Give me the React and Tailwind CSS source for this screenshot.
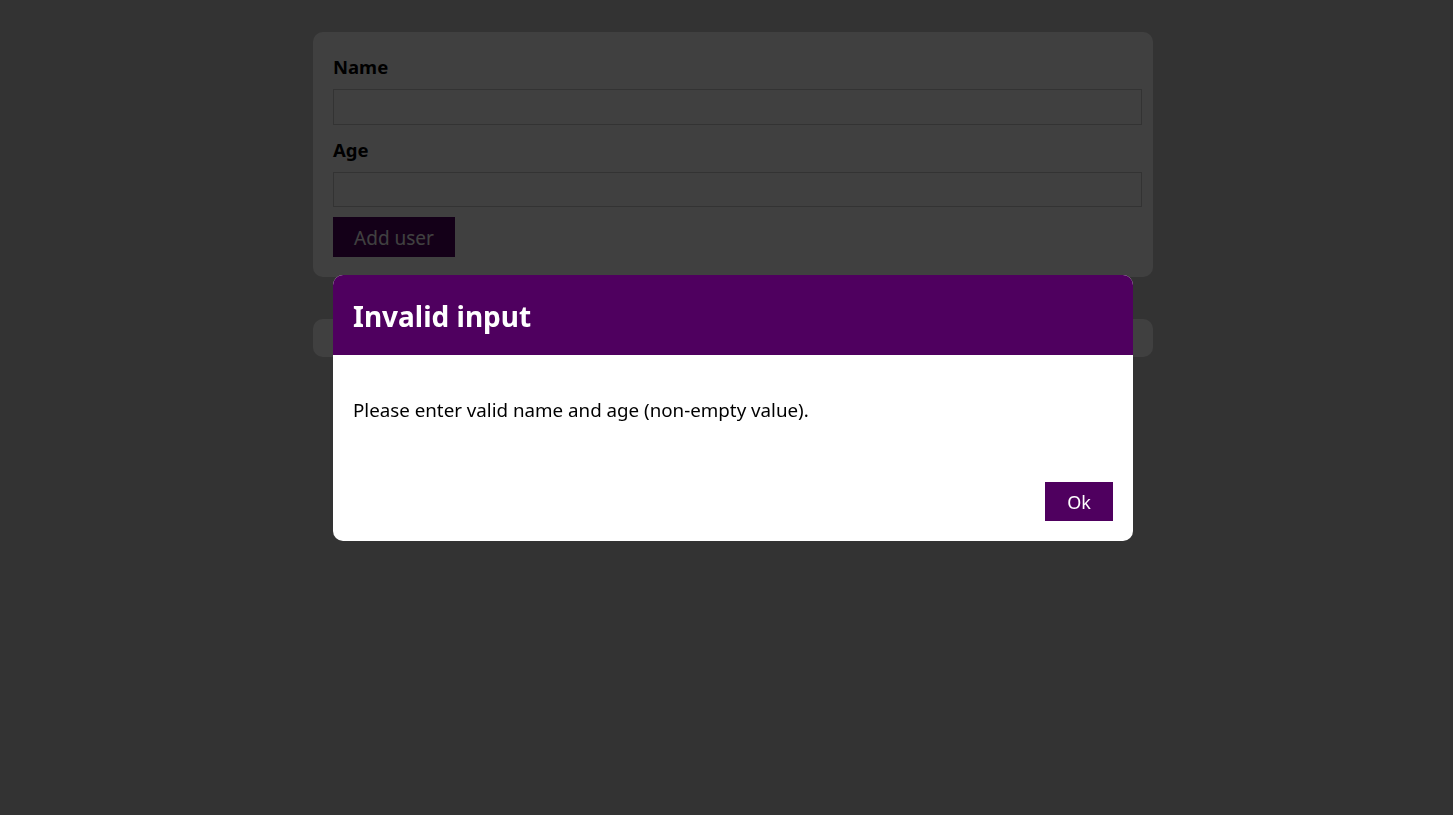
export default function App() {
  return (
    <div className="min-h-screen bg-[#cccccc] pt-8" style={{ fontFamily: '"Noto Sans", sans-serif' }}>
      {/* Add user form */}
      <section className="ml-[313px] w-[840px] rounded-[10px] bg-white px-5 pt-5 pb-5">
        <label className="block text-[18.5px] font-bold leading-[30px] text-black">Name</label>
        <input className="mt-[7px] block h-9 w-[809px] border border-[#cccccc] bg-white" />
        <label className="mt-[10px] block text-[18.5px] font-bold leading-[30px] text-black">Age</label>
        <input className="mt-[7px] block h-[35px] w-[809px] border border-[#cccccc] bg-white" />
        <button className="mt-[10px] h-10 w-[122px] bg-[#4f005f] pt-[2px] text-[19px] text-white">Add user</button>
      </section>

      {/* Users list (empty) */}
      <section className="ml-[313px] mt-[42px] h-[38px] w-[840px] rounded-[10px] bg-white" />

      {/* Backdrop */}
      <div className="fixed inset-0 bg-black/75" />

      {/* Error modal */}
      <div className="fixed top-[275px] left-[333px] w-[800px] overflow-hidden rounded-[10px] bg-white">
        <header className="flex h-[80px] items-center bg-[#4f005f] px-5">
          <h2 className="pt-[2px] text-[28px] font-bold text-white">Invalid input</h2>
        </header>
        <div className="h-[107px] px-5 pt-[43px]">
          <p className="text-[18.75px] leading-6 text-black">Please enter valid name and age (non-empty value).</p>
        </div>
        <footer className="flex justify-end p-5">
          <button className="h-[39px] w-[68px] bg-[#4f005f] pt-[1px] text-[18px] text-white">Ok</button>
        </footer>
      </div>
    </div>
  );
}
